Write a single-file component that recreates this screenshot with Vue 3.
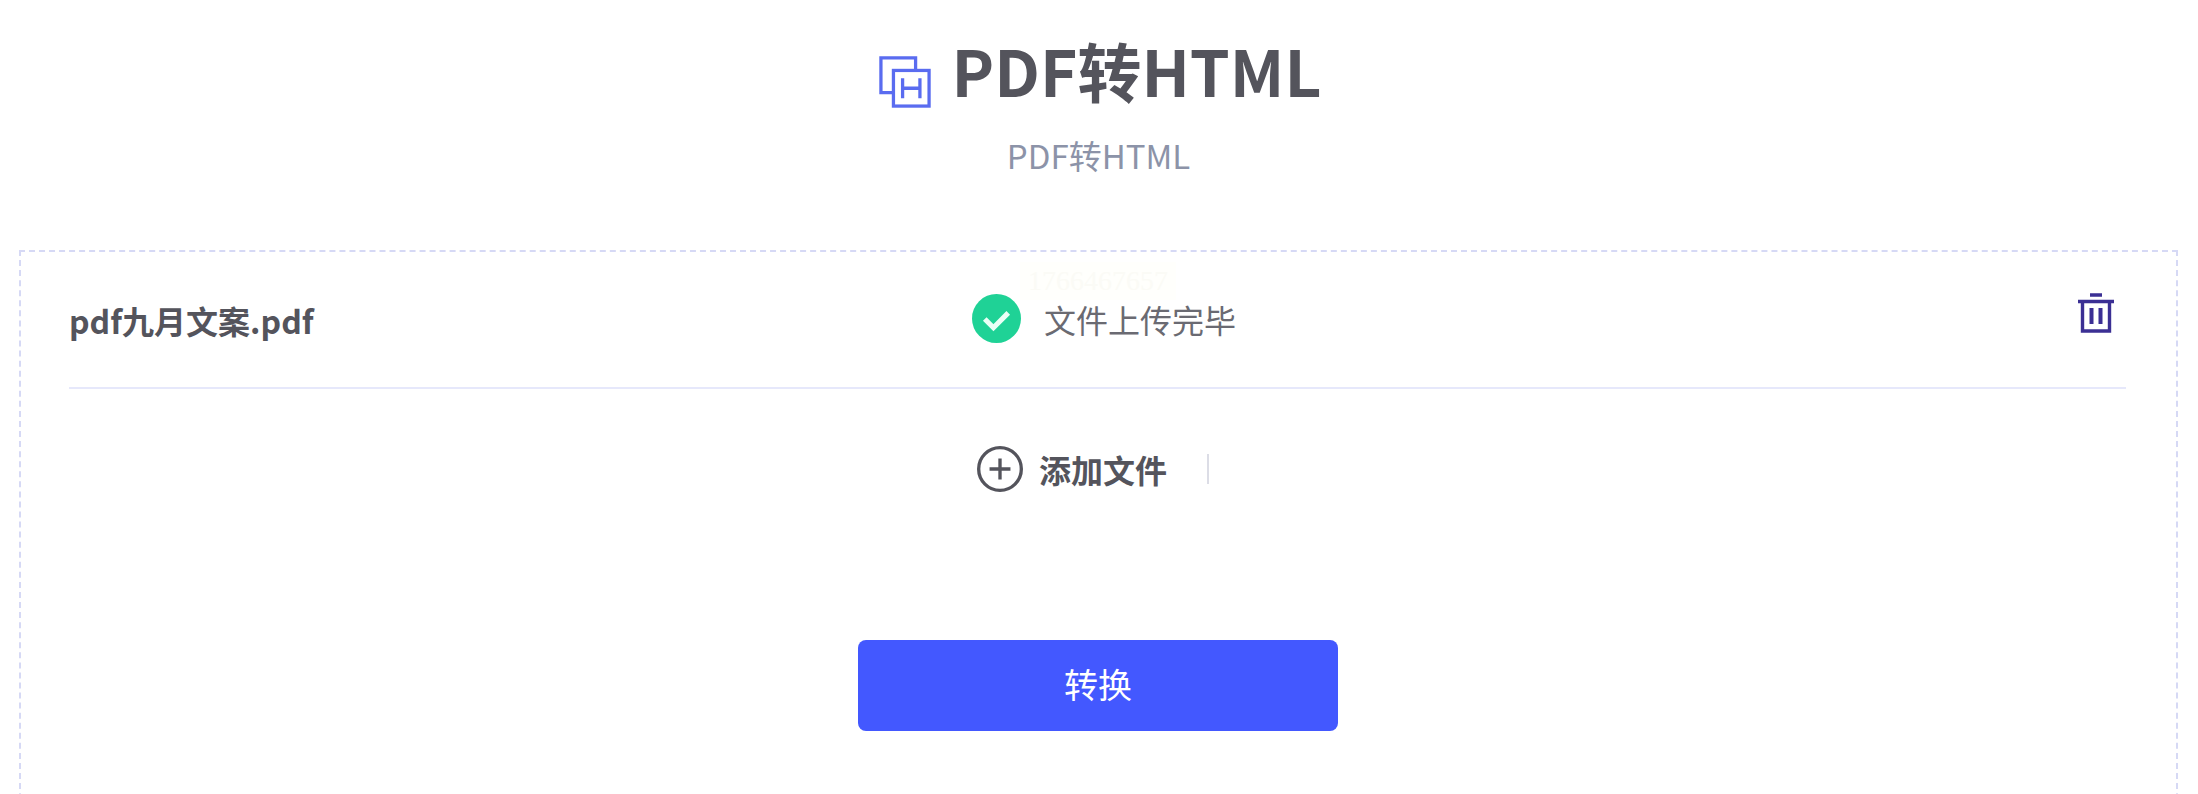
<template>
  <div class="page">
    <header class="head">
      <h1 class="title">
        <svg class="logo" viewBox="0 0 54 54" fill="none" stroke="#5a6cf0" stroke-width="3.4">
          <path d="M38 15V2H2v36h13" />
          <rect x="15" y="15" width="37" height="37" />
          <path d="M24.5 23v21M42.500 23v21M24.500 33.500h18" />
        </svg>
        <span>PDF转HTML</span>
      </h1>
      <p class="sub">PDF转HTML</p>
    </header>

    <section class="box">
      <div class="file-row">
        <div class="name">pdf九月文案.pdf</div>
        <div class="status">
          <span class="stamp">1766467657</span>
          <svg class="ok" viewBox="0 0 48 48">
            <circle cx="24" cy="24" r="24" fill="#1fd296" />
            <path d="M12.500 24.500l8.500 8.500 14.500-14.500" fill="none" stroke="#eafff6" stroke-width="5" />
          </svg>
          <span>文件上传完毕</span>
        </div>
        <svg class="trash" viewBox="0 0 36 40" fill="none" stroke="#3b2f94" stroke-width="3.400">
          <path d="M12 2h12M0 8.500h36M4.500 9v29h27V9" />
          <path d="M13.500 15v16M22.500 15v16" stroke-width="4" />
        </svg>
      </div>

      <div class="add-row">
        <div class="add">
          <svg class="plus" viewBox="0 0 44 44" fill="none" stroke="#54545c" stroke-width="3.200">
            <circle cx="22" cy="22" r="20.400" />
            <path d="M12 22h20M22 12v20" />
          </svg>
          <span>添加文件</span>
        </div>
        <i class="split"></i>
      </div>

      <button class="convert" type="button">转换</button>
    </section>
  </div>
</template>

<script setup>
</script>

<style>
html, body {
  background: #fff;
  overflow: hidden;
}
</style>

<style scoped>
.page {
  height: 794px;
  box-sizing: border-box;
  padding: 0 20px 0 19px;
  font-family: "Noto Sans CJK SC", "Noto Sans", sans-serif;
  overflow: hidden;
}

.head {
  height: 250px;
  text-align: center;
}

.title {
  margin: 0 0 0 3px;
  padding-top: 24px;
  height: 90px;
  display: flex;
  justify-content: center;
  align-items: center;
  gap: 21px;
  font-size: 64px;
  line-height: 90px;
  font-weight: 700;
  color: #54545c;
}

.logo {
  width: 52px;
  height: 52px;
  margin-top: 26px;
}

.sub {
  margin: 21px 0 0;
  font-size: 33px;
  line-height: 40px;
  color: #8c93a8;
}

.box {
  border: 2px dashed #d6d9f5;
  padding: 0 50px 0 48px;
  height: 700px;
  box-sizing: border-box;
  display: flex;
  flex-direction: column;
  align-items: center;
}

.file-row {
  width: 100%;
  height: 135px;
  border-bottom: 2px solid #e6e8fb;
  display: grid;
  grid-template-columns: 1fr auto 1fr;
  align-items: center;
}

.name {
  font-size: 32px;
  font-weight: 700;
  color: #54545c;
}

.status {
  position: relative;
  display: flex;
  align-items: center;
  gap: 23px;
  margin-left: 13px;
  margin-top: -2px;
  font-size: 32px;
  color: #6a6a72;
}

.stamp {
  position: absolute;
  left: 48px;
  top: -32px;
  padding: 4px 8px;
  font-family: "Liberation Serif", serif;
  font-size: 28px;
  line-height: 30px;
  color: #fbfbf6;
  background: #fffffc;
}

.ok {
  width: 49px;
  height: 49px;
}

.trash {
  width: 36px;
  height: 40px;
  justify-self: end;
  margin-right: 12px;
  margin-top: -14px;
}

.add-row {
  margin-top: 57px;
  margin-right: 9px;
  display: flex;
  align-items: center;
  gap: 40px;
}

.add {
  display: flex;
  align-items: center;
  gap: 16px;
  font-size: 32px;
  font-weight: 700;
  color: #54545c;
}

.plus {
  width: 46px;
  height: 46px;
}

.split {
  width: 2px;
  height: 30px;
  background: #dcdde6;
}

.convert {
  margin: 148px 0 0 1px;
  width: 480px;
  height: 91px;
  padding: 0 0 4px;
  border: 0;
  border-radius: 8px;
  background: #4358ff;
  color: #fff;
  font-family: inherit;
  font-size: 34px;
}
</style>
